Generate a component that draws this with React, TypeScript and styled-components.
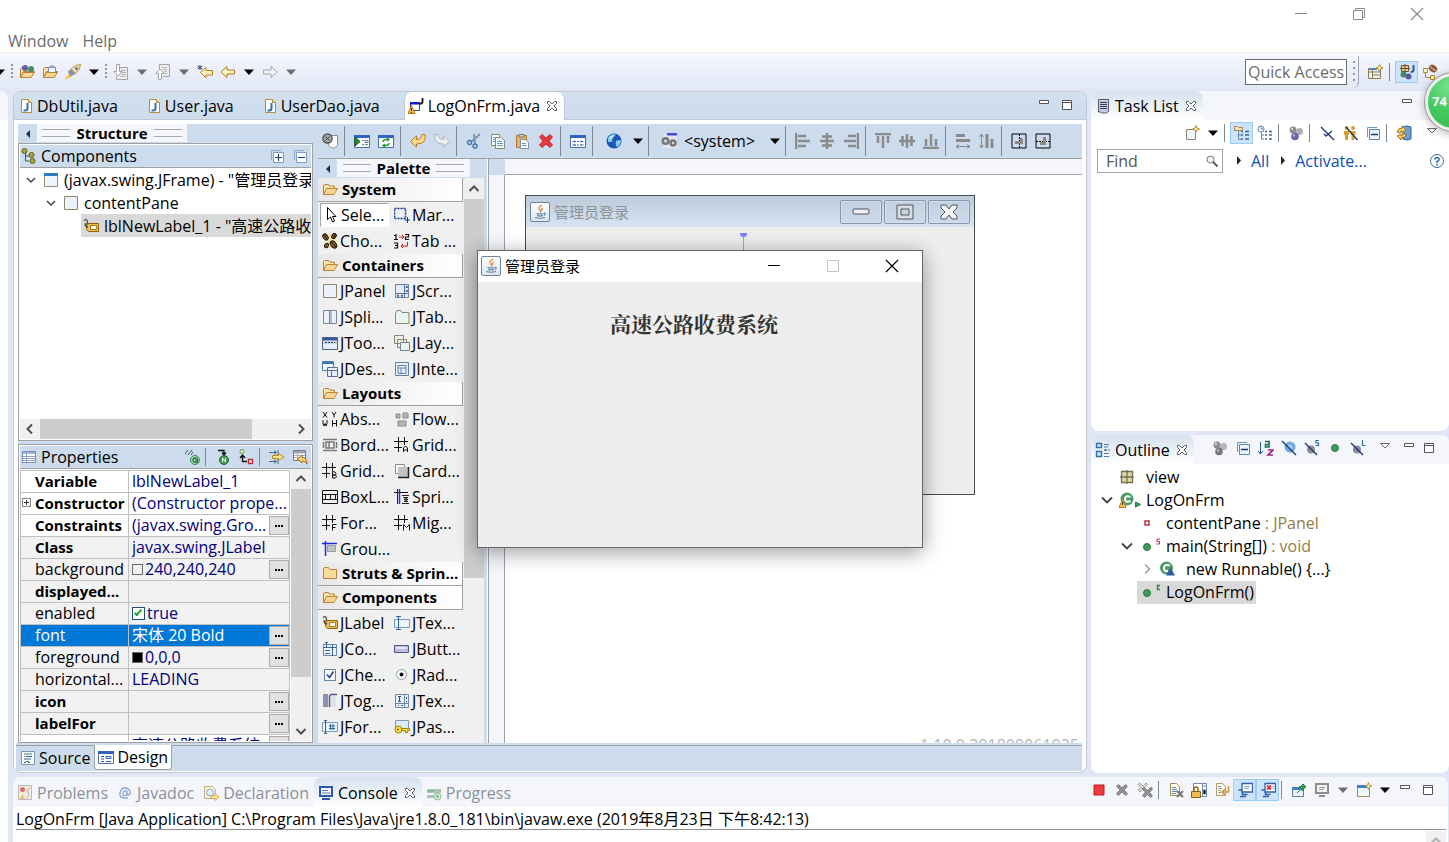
import React from "react";
import styled, { createGlobalStyle, css } from "styled-components";

const Global = createGlobalStyle`
  *, *::before, *::after { box-sizing: border-box; }
  body { margin: 0; }
  body, button, input, table {
    font-family: "Open Sans", "Noto Sans CJK SC", sans-serif;
    font-size: 16px;
    line-height: 20px;
    color: #000;
  }
  button, input { margin: 0; padding: 0; border: 0; background: none; }
  ul { list-style: none; margin: 0; padding: 0; }
`;

const c = {
  frame: "#e1e6f6",
  blue: "#cddcec",
  pale: "#f4f6fc",
  line: "#a0a0a0",
  edge: "#c3c7d0",
  grey: "#f0f0f0",
};

const boldFace = css`
  font-size: 15px;
  font-weight: 700;
`;

/* ------------------------------------------------------------------ icons */

const folderOpen = (
  <>
    <path d="M1.500 13.500v-9l1-1h4l1 1.500h5v3" fill="#fbe3ae" stroke="#b5833a" />
    <path d="M1.500 13.500l3-6h11l-3.500 6z" fill="#f8d795" stroke="#b5833a" />
  </>
);
const gridHash = <path d="M0 4.500h14M0 10.500h8M4.500 0v15M10.500 0v8" stroke="#111" fill="none" />;
const balls = (a: string, b: string, d: string) => (
  <>
    <circle cx="5" cy="5" r="3.500" fill={a} />
    <circle cx="11.500" cy="6.500" r="3.500" fill={b} />
    <circle cx="7" cy="11.500" r="3.800" fill={d} />
    <circle cx="4" cy="4" r="1.200" fill="#fff" opacity=".6" />
    <circle cx="6" cy="10.500" r="1.200" fill="#fff" opacity=".5" />
  </>
);
const windowBox = (
  <>
    <path d="M.5 2.500h15v12H.5z" fill="#fff" stroke="#4a6fa5" />
    <path d="M0 2h16v3H0z" fill="#2f63c0" />
  </>
);
const grey = "#8b8b8b";

const icons: Record<string, React.ReactNode> = {
  java: (
    <>
      <path d="M3.500 1.500h7l3 3v10h-10z" fill="#fefefe" stroke="#b0903f" />
      <path d="M10.500 1.500v3h3" fill="#f3d98e" stroke="#b0903f" />
      <path d="M9.500 5v5q0 2.500-2.500 2.500H5.500" stroke="#2f6ea5" strokeWidth="2" fill="none" />
    </>
  ),
  javaForm: (
    <>
      <path d="M2.500 4.500h9v8h-9z" fill="#fff" stroke="#3b4a90" />
      <path d="M2 4h10v2.500H2z" fill="#1515d0" />
      <path d="M14.500 0v4q0 2-3 1.500" stroke="#111" strokeWidth="1.800" fill="none" />
      <path d="M3.500 7.500l3.500 8H0z" fill="#f6b94a" stroke="#b97a1d" />
      <path d="M3.500 10v3M3.500 14v1" stroke="#333" />
    </>
  ),
  close: (
    <path
      d="M3.500 3.500h2l2.500 2.500 2.500-2.500h2v2L10 8l2.500 2.500v2h-2L8 10l-2.500 2.500h-2v-2L6 8 3.500 5.500z"
      fill="#fff"
      stroke="#5c5c5c"
    />
  ),
  folderBalls: (
    <>
      {folderOpen}
      <circle cx="6" cy="4" r="3" fill="#6a5aa8" />
      <circle cx="12" cy="5" r="3" fill="#3f9260" />
      <path d="M1.500 13.500l3-5h11l-3.500 5z" fill="#f8d795" stroke="#b5833a" />
    </>
  ),
  folderDoc: (
    <>
      {folderOpen}
      <path d="M6.500 3.500h7v5h-7zM8 3V2h4v1" fill="#eef4fb" stroke="#7c90b5" />
      <path d="M1.500 13.500l3-5h11l-3.500 5z" fill="#f8d795" stroke="#b5833a" />
    </>
  ),
  rocket: (
    <>
      <path d="M15.500.5Q10 .5 6 5l4.500 4.500q5-4 5-9z" fill="#f6dfae" stroke="#c0904c" />
      <path d="M6 5L3 7.500 5 13l5.500-3.500z" fill="#8b8fa8" />
      <circle cx="11.500" cy="4.500" r="1.500" fill="#5a75b5" />
      <path d="M4 9.500l-4 6 6-2.500z" fill="#f5c02c" />
    </>
  ),
  caret: <path d="M3 5.500h10l-5 5.500z" fill="#000" />,
  caretGrey: <path d="M3 5.500h10l-5 5.500z" fill="#6d6d6d" />,
  stepDown: (
    <>
      <path d="M6.500 3.500h8v12h-11V12" fill="#eee" stroke="#a5a5a5" />
      <path d="M8 6.500h5M8 8.500h5M8 10.500h5M7 12.500h6" stroke="#b5b5b5" />
      <path d="M3.500.5h3v7h2.500L5 12 1 7.500h2.500z" fill="#fff" stroke="#a2a2a2" />
    </>
  ),
  stepUp: (
    <>
      <path d="M4.500 5V.5h10v12H8" fill="#eee" stroke="#a5a5a5" />
      <path d="M7 3.500h5M8 5.500h4M9 7.500h3M9 9.500h3" stroke="#b5b5b5" />
      <path d="M3.500 15.500h3v-6h2.500L5 5 1 9.500h2.500z" fill="#fff" stroke="#a2a2a2" />
    </>
  ),
  backStar: (
    <>
      <path d="M3.500 8.500L9 3.500v3h6.500v4.500H9v3z" fill="#fff3c4" stroke="#b07d12" />
      <path d="M3 1v5M.5 2l5 3M5.500 2l-5 3" stroke="#264b77" />
    </>
  ),
  back: <path d="M1 8l6-5.500v3.500h7.500v4H7v3.500z" fill="#fff3c4" stroke="#b07d12" />,
  forward: <path d="M15 8L9 2.500v3.500H1.500v4H9v3.500z" fill="#f2f2f2" stroke="#a5a5a5" />,
  openPersp: (
    <>
      <path d="M.5 4.500h12v10H.5zM.5 8h12M4.500 5v9M4.500 11h8" fill="#e9f2fb" stroke="#8a7d50" />
      <path d="M1 4h8v2H1z" fill="#4f86c2" />
      <path d="M11.500.5l1 2.500 2.500 1-2.500 1-1 2.500-1-2.500-2.500-1 2.500-1z" fill="#fff2a8" stroke="#b8923a" />
    </>
  ),
  perspJava: (
    <>
      <path d="M2.500 1.500h7v6h-7zM6 0v9M1 4.500h10" stroke="#7a4a2a" fill="#e7cf9d" />
      <path d="M14.500 1v5q0 2-3 2" stroke="#2c5da0" strokeWidth="2" fill="none" />
      <circle cx="4.500" cy="10.500" r="3" fill="#3b8b55" />
      <circle cx="9.500" cy="12.500" r="3" fill="#6254a5" />
    </>
  ),
  perspEE: (
    <>
      <path d="M1.500 4.500h4v4h-4zM8.500 11.500h4v4h-4z" fill="#fff5c9" stroke="#b78a24" />
      <path d="M3.500 9v4.500H8" stroke="#8a8a8a" fill="none" />
      <ellipse cx="11" cy="4.500" rx="4.500" ry="3.500" fill="#8b5a34" transform="rotate(35 11 4.500)" />
      <path d="M8 2q2 3.500 6.500 5" stroke="#f0d9bd" fill="none" />
    </>
  ),
  leftTri: <path d="M10 4v8L6 8z" fill="#12315f" />,
  components: (
    <>
      <path d="M4.500 4v9H8M4.500 8H10" stroke="#1d5d78" fill="none" />
      <circle cx="3.500" cy="3" r="2.500" fill="#a9a93a" stroke="#5a5a14" />
      <circle cx="10.500" cy="7" r="2.500" fill="#a9a93a" stroke="#5a5a14" />
      <circle cx="11.500" cy="13" r="2.500" fill="#a9a93a" stroke="#5a5a14" />
    </>
  ),
  expandAll: (
    <>
      <path d="M2.500 12V2.500H12" fill="none" stroke="#8fa9c9" />
      <path d="M4.500 4.500h10v10h-10z" fill="#fff" stroke="#7d9cc3" />
      <path d="M6 9.500h7M9.500 6v7" stroke="#123f78" />
    </>
  ),
  collapseAll: (
    <>
      <path d="M2.500 12V2.500H12" fill="none" stroke="#8fa9c9" />
      <path d="M4.500 4.500h10v10h-10z" fill="#fff" stroke="#7d9cc3" />
      <path d="M6 9.500h7" stroke="#123f78" />
    </>
  ),
  chevDown: <path d="M4 6l4 4 4-4" stroke="#444" strokeWidth="1.500" fill="none" />,
  chevRight: <path d="M6 3.500l4.500 4.500L6 12.500" stroke="#9a9a9a" strokeWidth="1.500" fill="none" />,
  chevUp: <path d="M3.500 10L8 5.500l4.500 4.500" stroke="#505050" strokeWidth="2" fill="none" />,
  chevUpPale: <path d="M3.500 10L8 5.500l4.500 4.500" stroke="#b0b0b0" strokeWidth="2" fill="none" />,
  scrollDown: <path d="M3.500 6L8 10.500 12.500 6" stroke="#505050" strokeWidth="2" fill="none" />,
  scrollLeft: <path d="M10 3.500L5.500 8l4.500 4.500" stroke="#505050" strokeWidth="2" fill="none" />,
  scrollRight: <path d="M6 3.500l4.500 4.500L6 12.500" stroke="#505050" strokeWidth="2" fill="none" />,
  jframe: (
    <>
      <path d="M1.500 1.500h13v13h-13z" fill="#eef5fc" stroke="#9b8f64" />
      <path d="M1 1h14v3H1z" fill="#2f7dbd" />
    </>
  ),
  jpanel: <path d="M1.500 1.500h13v13h-13z" fill="#e9f1fb" stroke="#8c8766" />,
  jlabel: (
    <>
      <path d="M5.500 5.500h10v8h-10l-2-2.500v-3z" fill="#f0bf4e" stroke="#8a6412" />
      <path d="M7.500 7.500h6v4h-6z" fill="#fff" stroke="#a97b1a" />
      <path d="M1 2.500q3-2 3.500 1T2 6q0 2.500 3 3" stroke="#4a4a30" fill="none" strokeWidth="1.300" />
    </>
  ),
  propsTable: (
    <>
      <path d="M1.500 2.500h13v11h-13z" fill="#fff" stroke="#7b8da8" />
      <path d="M2 3h12v2H2z" fill="#9ab2d4" />
      <path d="M2 7.500h12M2 9.500h12M2 11.500h12M5.500 5v8" stroke="#8fa2c0" />
    </>
  ),
  gotoClass: (
    <>
      <path d="M1 5l3-4M4 6l4-5M7 6l2-3" stroke="#2d5f75" />
      <circle cx="11" cy="11" r="4.500" fill="#a8d8b4" stroke="#3c8a56" />
      <path d="M13.500 9.500Q9 8 9 11t4.500 2V11h-2" stroke="#1f6a3a" strokeWidth="1.300" fill="none" />
    </>
  ),
  nArrow: (
    <>
      <path d="M3 1.500h6V5M7 3.500L9 6l2-2.500" stroke="#111" strokeWidth="1.300" fill="none" />
      <circle cx="9" cy="11" r="4.500" fill="#3f9a4e" stroke="#246b30" />
      <path d="M7.500 13V9l3 4V9" stroke="#fff" fill="none" />
    </>
  ),
  convert: (
    <>
      <circle cx="4" cy="2.500" r="2" fill="#e7f5d5" stroke="#5d9a2c" />
      <path d="M4.500 13V7M2 9l2.500-3L7 9M4.500 12.500H9" stroke="#111" strokeWidth="1.400" fill="none" />
      <path d="M10.500 10.500h4v4h-4z" fill="#fff" stroke="#c42a36" strokeWidth="1.500" />
    </>
  ),
  filterAdv: (
    <>
      <path d="M0 3.500h7M9 1v5M5 1.500L7.500 3.500 5 5.500M0 12.500h7M9 10v5M5 10.500l2.500 2-2.500 2" stroke="#46688e" fill="none" />
      <path d="M3.500 6.500h6V4.500l5.500 3.500-5.500 3.500V9.500h-6z" fill="#ffe59a" stroke="#bb8620" />
    </>
  ),
  tableBack: (
    <>
      <path d="M1.500 1.500h12v10h-12z" fill="#fff" stroke="#7d7d7d" />
      <path d="M2 2h11v2.500H2z" fill="#9aa4b5" />
      <path d="M2 6.500h11M2 8.500h11M5.500 4v7" stroke="#a6afbd" />
      <path d="M5.500 10l4.500-4v2.500q5 0 5 6.500-1-3-5-3V14z" fill="#ffd66d" stroke="#a87416" />
    </>
  ),
  inspector: (
    <>
      <path d="M6.500 2.500h9v10l-3 2.500h-3l-3-3z" fill="#fff" stroke="#8a8a8a" />
      <circle cx="5.500" cy="5.500" r="4.500" fill="#aaa" stroke="#555" strokeWidth="1.500" />
      <path d="M3.500 3.500l4 4M7.500 3.500l-4 4" stroke="#333" />
    </>
  ),
  preview: (
    <>
      {windowBox}
      <path d="M8 7.500h2M8 11.500h2M11 7.500h3v2h-3zM11 11.500h3" stroke="#5c84be" fill="none" />
      <path d="M1 4l5 4.500L1 13z" fill="#2e8b2e" stroke="#17561b" />
    </>
  ),
  refresh: (
    <>
      {windowBox}
      <path d="M5 9q0-2.500 3-2.500h2M9 5l2 1.500L9 8M11 10q0 2.500-3 2.500H6M7 11l-2 1.500L7 14" stroke="#2d9a33" strokeWidth="1.400" fill="none" />
    </>
  ),
  undo: <path d="M.5 8.500L6.500 3v3.500q5.500 0 5.500-5h3Q17 11 6.500 11v3z" fill="#fbdc8d" stroke="#b8791c" />,
  redo: <path d="M15.500 8.500L9.500 3v3.500q-5.500 0-5.500-5H1Q-1 11 9.500 11v3z" fill="#eceef2" stroke="#aeb4bf" />,
  cut: (
    <>
      <path d="M14 1L5 9M8 1l1 10" stroke="#7790ae" strokeWidth="1.800" />
      <circle cx="3.500" cy="9.500" r="2" fill="none" stroke="#3f78ad" strokeWidth="1.400" />
      <circle cx="9" cy="13" r="2" fill="none" stroke="#3f78ad" strokeWidth="1.400" />
    </>
  ),
  copy: (
    <>
      <path d="M1.500 1.500h8v11h-8z" fill="#fff" stroke="#8c8c70" />
      <path d="M5.500 4.500h6l3 3v8h-9z" fill="#f2f7fd" stroke="#8c8c70" />
      <path d="M7 8.500h5M7 10.500h6M7 12.500h6M3 4.500h3M3 6.500h2M3 8.500h2" stroke="#6f9bd0" />
    </>
  ),
  paste: (
    <>
      <path d="M2.500 2.500h10v12h-10z" fill="#e5b26a" stroke="#b17b32" />
      <path d="M5 1.500h5v2.500H5z" fill="#d8d8d8" stroke="#777" />
      <path d="M6.500 6.500h5l3 3v6h-8z" fill="#fff" stroke="#8090a8" />
      <path d="M8 10.500h4M8 12.500h5" stroke="#6f9bd0" />
    </>
  ),
  del: <path d="M1.500 4L4 1.500 8 5l4-3.500L14.500 4 11 8l3.500 4-2.500 2.500L8 11l-4 3.500L1.500 12 5 8z" fill="#e23b3f" stroke="#c82a30" />,
  testWin: (
    <>
      {windowBox}
      <path d="M2.500 8.500h3M10.500 8.500h3M2.500 12h3M10.500 12h3M7 8.500h2M7 12h2" stroke="#2f63c0" />
      <path d="M5 7.500v2M11 7.500v2M5 11v2M11 11v2" stroke="#2f63c0" />
    </>
  ),
  globe: (
    <>
      <circle cx="8" cy="8" r="7.500" fill="#1c57b8" />
      <path d="M2 5q3-4 7-4 1 2-2 3t-1 3-4 2zM10 8q3-2 5 0-1 5-4 6-2-2-1-6z" fill="#7fd0f0" />
      <circle cx="5.500" cy="4.500" r="2" fill="#fff" opacity=".55" />
    </>
  ),
  gears: (
    <>
      <path d="M2 1h14v14H2z" fill="#e3e6f0" />
      <path d="M6 0h10v2.500H6z" fill="#4a4ad8" />
      <circle cx="4.500" cy="8" r="2.800" fill="#ddd" stroke="#777" strokeWidth="2.500" />
      <circle cx="12" cy="10" r="2.500" fill="#ddd" stroke="#777" strokeWidth="2.500" />
    </>
  ),
  alignL: <path d="M1 0v16M3 3h8M3 8h12M3 13h8" stroke={grey} strokeWidth="2.500" />,
  alignH: <path d="M8 0v16M3 3.500h10M1 8h14M3 12.500h10" stroke={grey} strokeWidth="2.500" />,
  alignR: <path d="M15 0v16M5 3h8M1 8h12M5 13h8" stroke={grey} strokeWidth="2.500" />,
  alignT: <path d="M0 1h16M3 3v7M8 3v12M13 3v7" stroke={grey} strokeWidth="2.500" />,
  alignM: <path d="M0 8h16M3.500 3v10M8 1v14M12.500 3v10" stroke={grey} strokeWidth="2.500" />,
  alignB: <path d="M0 15h16M3 6v7M8 1v12M13 6v7" stroke={grey} strokeWidth="2.500" />,
  sameW: (
    <>
      <path d="M1 2.500h9M1 7.500h14" stroke={grey} strokeWidth="3" />
      <path d="M1 13.500h14M4 11.500l-3 2 3 2M12 11.500l3 2-3 2" stroke={grey} fill="none" />
    </>
  ),
  sameH: (
    <>
      <path d="M8 1v14M13 6v9" stroke={grey} strokeWidth="3" />
      <path d="M2.500 1v14M.5 4l2-3 2 3M.5 12l2 3 2-3" stroke={grey} fill="none" />
    </>
  ),
  centerH: (
    <>
      <path d="M1 1h14v14H1z" fill="none" stroke="#000" />
      <path d="M8.500 1v14" stroke="#000" strokeDasharray="2 1" />
      <path d="M4 8h8v3H4zM9 5h3v3H9z" fill="#8a8a8a" />
    </>
  ),
  centerV: (
    <>
      <path d="M1 1h14v14H1z" fill="none" stroke="#000" />
      <path d="M1 8.500h14" stroke="#000" strokeDasharray="2 1" />
      <path d="M5 9h3v3H5zM8 4h3v8H8z" fill="#8a8a8a" />
    </>
  ),
  folderOpen,
  folderClosed: <path d="M1.500 13.500v-10l1-1h4l1.500 2h6.500v9z" fill="#fbdc9c" stroke="#b5833a" />,
  cursor: <path d="M4.500.5v12l3-2.500 2 5 2-1-2-4.500h3.500z" fill="#fff" stroke="#000" />,
  marquee: (
    <>
      <path d="M.5 1.500h11v10H.5z" fill="none" stroke="#12379c" strokeWidth="1.500" strokeDasharray="2 1" />
      <path d="M13.500 10v6M10.500 13h6" stroke="#12379c" />
    </>
  ),
  beans: (
    <>
      <path d="M6 1h6l3 8-4 6H6z" fill="#efeaa8" />
      <g fill="#8a6034" stroke="#1e140a">
        <ellipse cx="3.500" cy="4" rx="2.300" ry="3.300" transform="rotate(-35 3.500 4)" />
        <ellipse cx="12" cy="3" rx="2" ry="2.700" transform="rotate(35 12 3)" />
        <ellipse cx="11.500" cy="11.500" rx="2.500" ry="4" transform="rotate(-40 11.500 11.500)" />
        <ellipse cx="4.500" cy="12.500" rx="1.800" ry="2.300" transform="rotate(30 4.500 12.500)" />
      </g>
      <path d="M2 2l3 4M9 9l5 5M13.500 1L11 5" stroke="#1e140a" />
    </>
  ),
  tabOrder: (
    <>
      <path d="M0 2.500h2M2 1v6M0 6.500h4M11 1.500h3.500v2.500h-3v2.500H15M0 10h3.500v5H0M1 12.500h2.500" stroke="#111" strokeWidth="1.200" fill="none" />
      <path d="M5 4h4M8 2l2 2-2 2M13.500 9v4H7M9 11l-2 2 2 2" stroke="#e01616" fill="none" />
    </>
  ),
  jscroll: (
    <>
      <path d="M1.500 1.500h13v13h-13z" fill="#e3edf8" stroke="#6f83a0" />
      <path d="M10.500 2v12M2 10.500h12" stroke="#5b7399" />
      <path d="M12 3.500h1.500v1H12zM12 7.500h1.500v1H12zM3.500 12h1v1.500h-1zM7.500 12h1v1.500h-1z" fill="#223f73" stroke="#4d6a9b" />
    </>
  ),
  jsplit: <path d="M1.500 1.500h13v13h-13zM7.500 2v12M9 2v12" fill="#e9f1fb" stroke="#7d86a0" />,
  jtab: <path d="M1.500 14.500v-10l1.500-3h4l1 2h7v11z" fill="#eaf4ee" stroke="#8c8766" />,
  jtoolbar: (
    <>
      <path d="M.5 2.500h15v12H.5z" fill="#e5edf8" stroke="#4e6286" />
      <path d="M1 3h14v2.500H1z" fill="#3557a0" />
      <path d="M1 6h14v3H1z" fill="#c9d6ee" />
      <path d="M3 7.500h10" stroke="#333" strokeDasharray="2 1" />
    </>
  ),
  jlayered: (
    <g fill="#e9f1ea" stroke="#8c8766">
      <path d="M.5.500h9v8h-9zM3.500 4.500h9v8h-9z" />
      <path d="M6.500 7.500h9v8h-9z" stroke="#6f83a0" />
    </g>
  ),
  jdesktop: (
    <>
      <path d="M.5.500h11v9H.5z" fill="#f2f6fb" stroke="#4e7fb5" />
      <path d="M.5 1h11v2H.5z" fill="#3878b8" />
      <path d="M5.500 6.500h10v9h-10zM9.500 9v6M6 9.500h9" fill="#e4eefa" stroke="#5a6c98" />
    </>
  ),
  jinternal: <path d="M1.500 1.500h13v13h-13zM4 4.500h8v8H4zM4 7h8M7 7v5" fill="#eef4fb" stroke="#5f7ca6" />,
  absolute: (
    <path
      d="M1 1l4 5.500M5 1L1 6.500M10 1l2 3v2.500M14 1l-2 3M1 9v3.500l1 2.500 1-2.500 1 2.500 1-2.500V9M10.500 9v6.500M14.500 9v6.500M10.500 12.500h4"
      stroke="#111"
      fill="none"
    />
  ),
  flow: (
    <g fill="#b5b5b5" stroke="#8a8a8a">
      <path d="M2 3h4v4H2zM9 2h5v5H9zM4 10h8v5H4z" />
    </g>
  ),
  border: (
    <path d="M1 2.500h14M1 13.500h14M1.500 5v6M14.500 5v6M4 5h8v6H4zM7 5v6" stroke="#777" fill="none" strokeWidth="1.500" />
  ),
  gridA: <>{gridHash}<path d="M9.500 15v-4l2-2 2 2v4M9.500 13h4" stroke="#111" fill="none" /></>,
  gridB: <>{gridHash}<path d="M10.500 8.500v6.500h3l1-1.500-1-1.500h-3 2.500l1-1.500-1-1.500z" stroke="#111" fill="none" /></>,
  gridF: <>{gridHash}<path d="M10.500 15.500v-6h4M10.500 12.500h3" stroke="#111" fill="none" /></>,
  gridM: <>{gridHash}<path d="M9.500 15.500v-6l3 3 3-3v6" stroke="#111" fill="none" /></>,
  card: (
    <>
      <path d="M1.500 1.500h9v9h-9z" fill="#fff" stroke="#888" />
      <path d="M4 4h10v10H4z" fill="#c2c2c2" />
      <path d="M14.500 4v10.500H4" stroke="#222" fill="none" strokeWidth="1.500" />
    </>
  ),
  box: <path d="M.5 1.500h15v13H.5zM.5 5.500h15M3.500 5.500v5h10v-5M8.500 5.500v5M.5 10.500h15" fill="none" stroke="#111" />,
  spring: (
    <>
      <path d="M0 3.500h14" stroke="#111" />
      <path d="M5.500 0v15" stroke="#2030e0" strokeWidth="1.500" />
      <path d="M3.500 0v15M8 6.500h7M9 8.500h5l-4 2h4l-4 2h4M8 14.500h7" stroke="#222" fill="none" />
    </>
  ),
  group: (
    <>
      <path d="M0 2.500h15M3.500 0v15" stroke="#1c2cf0" strokeWidth="1.500" />
      <path d="M5.500 4.500h8v6h-8z" fill="#c4c4c4" stroke="#999" />
    </>
  ),
  jtext: (
    <>
      <path d="M.5 4.500h15v8H.5z" fill="#eaf3fc" stroke="#7b98be" />
      <path d="M4.500 1v14M2 1.500h5M2 14.500h5" stroke="#31629c" />
    </>
  ),
  jcombo: (
    <>
      <path d="M1.500 3.500h13v11h-13z" fill="#e9f2fb" stroke="#6c86ac" />
      <path d="M1 6.500h13M10.500 4v11M3 9.500h5M3 12.500h5M4.500 1v5M3 1.500h3" stroke="#3d6499" />
    </>
  ),
  jbutton: (
    <>
      <path d="M.5 4.500h14v7H.5z" fill="#b9bde4" stroke="#55597f" />
      <path d="M2 6h11v2H2z" fill="#e6e8f8" />
    </>
  ),
  jcheck: (
    <>
      <path d="M2.500 2.500h11v11h-11z" fill="#f2f8fe" stroke="#6583ab" />
      <path d="M5 7.500l2.500 3 4-6" stroke="#24477c" strokeWidth="1.600" fill="none" />
    </>
  ),
  jradio: (
    <>
      <circle cx="7.500" cy="7.500" r="5" fill="#fff" stroke="#8aa191" />
      <circle cx="7.500" cy="7.500" r="2" fill="#111" />
    </>
  ),
  jtoggle: (
    <>
      <path d="M1 1h5v13H1z" fill="#8d90b5" />
      <path d="M7.500 14V3l1.500-1.500h6" stroke="#55598a" strokeWidth="1.500" fill="none" />
      <path d="M9 3h5v11H9z" fill="#dfe1f2" />
    </>
  ),
  jtextarea: (
    <>
      <path d="M1.500 1.500h13v13h-13zM10.500 2v12M2 10.500h12" fill="#eaf3fc" stroke="#6c86ac" />
      <path d="M5.500 3v6M4 3.500h3M4 8.500h3M12.500 4v2M12.500 8v1M4 12.500h1M7 12.500h2" stroke="#2f5690" />
    </>
  ),
  jformat: (
    <>
      <path d="M.5 3.500h15v9H.5z" fill="#eaf3fc" stroke="#7b98be" />
      <path d="M3.500 1v14M2 1.500h3M2 14.500h3M8.500 5v6M11 5v6M7 7h6M7 9.500h6" stroke="#31629c" />
    </>
  ),
  jpass: (
    <>
      <path d="M1.500 1.500h13v8h-13z" fill="#dcecf9" stroke="#8098b5" />
      <circle cx="4.500" cy="10.500" r="3.500" fill="#ffe04a" stroke="#a37d12" />
      <path d="M7.500 9.500h8v2h-2v2h-2v-2h-4z" fill="#ffe04a" stroke="#a37d12" />
      <circle cx="4" cy="10.500" r="1" fill="#7a5c10" />
    </>
  ),
  javaCup: (
    <>
      <path d="M10 1q-5 3-2 5 1.500 1.500 0 2.500M11 4Q8.500 5 10 7" stroke="#e8813a" strokeWidth="1.200" fill="none" />
      <path d="M4.500 9.500q3.500 1 7 0M5 11.500q3 1 6 0M3 13.500q5 1.500 10 0M12 9q2.500 0 0 2.500" stroke="#5b819e" strokeWidth="1.200" fill="none" />
    </>
  ),
  minPane: <path d="M3.500 3.500h9v3h-9z" fill="#fff" stroke="#555" />,
  maxPane: <path d="M3.500 3.500h9v9h-9zM3.500 5.500h9" fill="#fff" stroke="#555" />,
  viewMenu: <path d="M3.500 3.500h9L8 8z" fill="#fff" stroke="#6b6b6b" />,
  taskList: (
    <>
      <path d="M3.500 1.500h10v12q-2 1.500-3 1.500h-4q-1-2-3-1z" fill="#c9cbe0" stroke="#55567a" />
      <path d="M5 4.500h7M5 6.500h7M5 8.500h7M5 10.500h7" stroke="#3c3d5a" />
    </>
  ),
  newTask: (
    <>
      <path d="M2.500 4.500h9v10h-9z" fill="#eef5fc" stroke="#8b8466" />
      <path d="M12 .5l1 2.500 2.500 1L13 5l-1 2.500L11 5 8.500 4 11 3z" fill="#fff2a8" stroke="#b8923a" />
    </>
  ),
  categorized: (
    <>
      <path d="M.5 5.500v-4h3l1 1h4v3z" fill="#f7e3bd" stroke="#a5845a" />
      <path d="M4.500 6v8.500H7M4.500 10H7" stroke="#6d83a0" fill="none" />
      <path d="M7 6.500h2M7 10h2M7 14h2M11 6.500h4M11 10h4M11 14h4" stroke="#3e6597" strokeWidth="1.500" />
    </>
  ),
  scheduled: (
    <>
      <circle cx="4" cy="4" r="3" fill="#fff" stroke="#5f80ab" />
      <path d="M4 2v2h2M4.500 7.500v6.500H7M4.500 10H7" stroke="#5f80ab" fill="none" />
      <path d="M8 6.500h2M8 10h2M8 14h2M12 6.500h3M12 10h3M12 14h3" stroke="#3e6597" strokeWidth="1.500" />
    </>
  ),
  workweek: balls("#8c8c8c", "#b0b0b0", "#6b62ab"),
  greyBalls: balls("#8c8c8c", "#b5b5b5", "#777"),
  focus: <path d="M2 2l13 13M5 9l2 2 6-5" stroke="#203a73" strokeWidth="1.400" fill="none" />,
  mine: (
    <>
      <g fill="#d99f2b">
        <circle cx="4.500" cy="3" r="2" />
        <circle cx="11" cy="3" r="2" />
        <path d="M2 6h5v4H6v5H3v-5H2zM8.500 6h5v4h-1v5h-3v-5h-1z" />
      </g>
      <path d="M4 2l11.500 13" stroke="#203a73" strokeWidth="1.400" />
    </>
  ),
  collapse: (
    <>
      <path d="M2.500 12V2.500H12" fill="none" stroke="#6d97b5" />
      <path d="M4.500 4.500h10v10h-10z" fill="#eaf5fd" stroke="#5d86a8" />
      <path d="M6 9.500h7" stroke="#0c3f72" strokeWidth="1.500" />
    </>
  ),
  sync: (
    <>
      <path d="M7 2q4-2 8 0v12q-4 2-8 0z" fill="#6f9fd6" stroke="#315f9a" />
      <path d="M1 7q1-4 5-4v-2l4 4-4 3V6Q4 6 4 8zM10 9q0 4-5 4v2l-4-4 4-2v1.500q2 0 2-2z" fill="#f7cf63" stroke="#9d7116" />
    </>
  ),
  search: (
    <>
      <circle cx="6.500" cy="6.500" r="3.500" fill="#eef4fa" stroke="#777" />
      <path d="M9 9l4.500 4.500" stroke="#555" strokeWidth="1.800" />
    </>
  ),
  rightTri: <path d="M6 3v9l4-4.500z" fill="#222" />,
  help: (
    <>
      <circle cx="8" cy="8" r="6.500" fill="#fff" stroke="#3c6a93" />
      <path d="M6 6.500Q6 4.500 8 4.500t2 2Q10 8 8 8.500V10M8 11v1.500" stroke="#2d6da6" strokeWidth="1.600" fill="none" />
    </>
  ),
  outline: (
    <>
      <path d="M1.500 1.500h5v4h-5zM1.500 9.500h5v5h-5z" fill="#cfe6fb" stroke="#2f6fae" strokeWidth="1.400" />
      <path d="M9 2.500h5M9 11.500h5M9 14.500h5M9 5h4" stroke="#4e7cab" />
      <path d="M9.500 7.500h2v1h-2zM13 8h2" stroke="#4e7cab" fill="none" />
    </>
  ),
  sortAz: (
    <>
      <path d="M2.500 2v12M0 11l2.500 3L5 11" stroke="#2c5b95" fill="none" />
      <path d="M7 1.500h4V7H7.500V4.500H11" stroke="#187058" strokeWidth="1.600" fill="none" />
      <path d="M10 10h5l-5 5h5" stroke="#a3248b" strokeWidth="1.600" fill="none" />
    </>
  ),
  hideFields: (
    <>
      <circle cx="9" cy="7" r="5.500" fill="#6fa9de" />
      <circle cx="9" cy="7" r="2.500" fill="#a9cdf0" />
      <path d="M1 1l14 14" stroke="#203a73" strokeWidth="1.400" />
    </>
  ),
  hideStatic: (
    <>
      <circle cx="7" cy="9.500" r="4" fill="#8b8b98" />
      <path d="M1 3l12 12" stroke="#203a73" strokeWidth="1.400" />
      <path d="M15 .5h-3v2.500h2.500v2.500H11.500" stroke="#2f6f9a" strokeWidth="1.200" fill="none" />
    </>
  ),
  greenDot: <circle cx="8" cy="8" r="3.500" fill="#3f9a58" stroke="#2b7441" />,
  hideLocal: (
    <>
      <circle cx="7" cy="9.500" r="4" fill="#8b8b98" />
      <path d="M1 3l12 12" stroke="#203a73" strokeWidth="1.400" />
      <path d="M12.500 0v5.500h3" stroke="#2f6f9a" strokeWidth="1.200" fill="none" />
    </>
  ),
  pkg: <path d="M2.500 2.500h11v11h-11zM8 1v14M1 8h14" fill="#dcd9ae" stroke="#77704a" strokeWidth="1.300" />,
  classRun: (
    <>
      <circle cx="8" cy="7" r="6.500" fill="#4b9b62" />
      <path d="M11.500 5Q6 3 6 7t5.500 2" stroke="#fff" strokeWidth="2" fill="none" />
      <path d="M3.500 7.500l3.500 8H0z" fill="#f8c15a" stroke="#b97a1d" />
      <path d="M3.500 10v3" stroke="#333" />
      <path d="M16.500 10v5l5-2.500z" fill="#3f9a58" stroke="#2b7441" />
    </>
  ),
  fieldRed: <path d="M6 6h4v4H6z" fill="#fff" stroke="#c5303e" strokeWidth="1.500" />,
  methodS: (
    <>
      <circle cx="8" cy="9" r="3.500" fill="#3f9a58" stroke="#2b7441" />
      <path d="M21 1h-3v2.500h2.500v2.500H17.500" stroke="#c5304e" fill="none" />
    </>
  ),
  methodC: (
    <>
      <circle cx="8" cy="9" r="3.500" fill="#3f9a58" stroke="#2b7441" />
      <path d="M21 1.500h-2.500v4H21" stroke="#2b8a41" fill="none" strokeWidth="1.400" />
    </>
  ),
  classAnon: (
    <>
      <circle cx="7.500" cy="7" r="6.500" fill="#4b9b62" />
      <path d="M11 4.500Q5 2.500 5 7t4 2.500" stroke="#fff" strokeWidth="2" fill="none" />
      <path d="M11.500 6.500l4.500 8H7z" fill="#2c5fa8" />
    </>
  ),
  source: (
    <>
      <path d="M1.500 1.500h13v13h-13z" fill="#f8fbfe" stroke="#7d98b8" />
      <path d="M4 4h8M6 11.500h3" stroke="#2f8a4f" strokeWidth="1.200" />
      <path d="M6 6.500h6M4 9h7M4 12.500h2" stroke="#34619a" strokeWidth="1.200" />
      <path d="M4 6.500h1M8 12.500h2" stroke="#b5472f" strokeWidth="1.200" />
    </>
  ),
  design: (
    <>
      {windowBox}
      <path d="M3 7.500h3M3 10h3M3 12.500h3M8 7.500h5v2H8zM8 12.500h5" stroke="#2f5fa8" fill="none" />
    </>
  ),
  problems: (
    <>
      <path d="M1.500.500h13v14h-13z" fill="#f3ecd6" stroke="#b5b8c6" />
      <circle cx="5.500" cy="4.500" r="2.500" fill="#e06a72" />
      <path d="M5.500 9l3 5h-6z" fill="#eec277" />
      <path d="M13 3q-4 1-2 4t-1 6" stroke="#9fb0d4" fill="none" />
    </>
  ),
  at: (
    <path d="M10 6Q6 5 6 8.500T9.500 10L10 5.500q-.5 5 1.500 4.500 2-.5 1.500-3.500Q12 3 8 3T3 8t5 5h3" stroke="#8aa5cf" fill="none" strokeWidth="1.300" />
  ),
  declaration: (
    <>
      <path d="M1.500 1.500h8l3 3v9h-11z" fill="#f7f1dd" stroke="#c1b084" />
      <circle cx="7" cy="7.500" r="3.500" fill="#e1ecf8" stroke="#8fa9cc" />
      <path d="M8 10.500h4V8.500l4 3.500-4 3.500v-2H8z" fill="#fbe4a0" stroke="#d2a958" />
    </>
  ),
  console: (
    <>
      <path d="M2 2h12v9H2z" fill="#f3f7fd" stroke="#2a5ba8" strokeWidth="2" />
      <path d="M4 5.500h6M4 8h8" stroke="#5d7fb8" />
      <path d="M4 14h8" stroke="#2a5ba8" strokeWidth="2" />
    </>
  ),
  progress: (
    <>
      <path d="M1 4h14v4H1zM1 10h7v3H1z" fill="#b4c0b6" />
      <path d="M2 5h6v2H2z" fill="#7fba8d" />
      <circle cx="11.500" cy="11.500" r="3.500" fill="#d7eedb" stroke="#88be94" />
      <path d="M10.500 9.500v4l3-2z" fill="#6db37c" />
    </>
  ),
  stop: <path d="M3 3h10v10H3z" fill="#ee3a3f" stroke="#b51e25" />,
  removeX: <path d="M2.500 4.500l2-2L8 6l3.500-3.500 2 2L10 8l3.500 3.500-2 2L8 10l-3.500 3.500-2-2L6 8z" fill="#909090" stroke="#858585" />,
  removeAll: (
    <>
      <path d="M1 2.500l1.500-1.500L6 4l3-3 1.500 1.500L7 6l-4 4-2-2 3-2.500z" fill="#ddd" stroke="#a0a0a0" />
      <path d="M5 7l2-2 3.500 3.500L14 5l1.500 2-3 3.500L15.500 14l-2 1.500-3-3-3 3-2-2L8.500 10z" fill="#909090" stroke="#858585" />
    </>
  ),
  clearDoc: (
    <>
      <path d="M2.500 1.500h6l3 3v9h-9z" fill="#fffbe8" stroke="#a08a50" />
      <path d="M4 5.500h4M4 7.500h5M4 9.500h5M4 11.500h4" stroke="#5b84bd" />
      <path d="M9 9l6 6M15 9l-6 6" stroke="#7a7a7a" strokeWidth="2.200" />
    </>
  ),
  scrollLock: (
    <>
      <path d="M2.500 1.500h13v13h-13zM11.500 2v12" fill="#fff" stroke="#6e89b0" />
      <path d="M12.500 4h2M12.500 8h2v4h-2z" stroke="#3d6499" />
      <path d="M3 9V7q0-2 2-2t2 2v2" stroke="#8c6414" fill="none" strokeWidth="1.400" />
      <path d="M.5 9.500h9v6h-9z" fill="#f0bc4c" stroke="#8c6414" />
    </>
  ),
  wrap: (
    <>
      <path d="M2.500 1.500h6l3 3v9h-9z" fill="#fffbe8" stroke="#b09d60" />
      <path d="M4 4.500h3M4 6.500h4M4 8.500h3M4 10.500h3" stroke="#8a9cc4" />
      <path d="M14.500 4v6H9M11 7l-3 3 3 3" stroke="#d29b3c" strokeWidth="1.600" fill="none" />
    </>
  ),
  showOut: (
    <>
      <path d="M1.500 8h4v4.500h5M3 14.500h6" fill="none" stroke="#2f62ad" strokeWidth="1.500" />
      <path d="M5 1.500h10.500v8.500H5z" fill="#fff" stroke="#2f62ad" strokeWidth="1.300" />
      <path d="M7 4.500h6M7 6.500h5" stroke="#8aa5d4" />
    </>
  ),
  showErr: (
    <>
      <path d="M1.500 8h4v4.500h5M3 14.500h6" fill="none" stroke="#2f62ad" strokeWidth="1.500" />
      <path d="M5 1.500h10.500v8.500H5z" fill="#fff" stroke="#2f62ad" strokeWidth="1.300" />
      <path d="M7 3.500l4 4M11 3.500l-4 4" stroke="#e0343a" strokeWidth="1.800" />
      <path d="M12.500 4.500h2M12.500 6.500h2" stroke="#8aa5d4" />
    </>
  ),
  pin: (
    <>
      <path d="M1.500 5.500h11v9h-11z" fill="#e4f1fb" stroke="#6d7f95" />
      <path d="M1 5h12v3H1z" fill="#3e83c4" />
      <path d="M6 11l3-3M8 5l4 4 1-3 2-1-3-3-1 2z" stroke="#1f7a33" fill="#36a04d" />
    </>
  ),
  monitor: (
    <>
      <path d="M2 2h12v9H2z" fill="#f3f3f3" stroke="#8d8d8d" strokeWidth="2" />
      <path d="M5 5.500h6M5 7.500h5" stroke="#999" />
      <path d="M5 14h6" stroke="#8d8d8d" strokeWidth="2" />
    </>
  ),
  newConsole: (
    <>
      <path d="M1.500 3.500h12v11h-12z" fill="#eef6fd" stroke="#a08a50" />
      <path d="M1 3h10v3H1z" fill="#3e83c4" />
      <path d="M12.500.5l1 2.500 2 1-2 1-1 2.500-1-2.500-2-1 2-1z" fill="#fff2a8" stroke="#b8923a" />
    </>
  ),
};

type IconProps = { name: string; w?: number; size?: number };
const Picture = styled.svg`
  display: block;
  flex: none;
`;
const Icon = ({ name, w = 16, size = 16 }: IconProps) => (
  <Picture width={(w * size) / 16} height={size} viewBox={`0 0 ${w} 16`} aria-hidden="true">
    {icons[name]}
  </Picture>
);

/* ------------------------------------------------------------ shared parts */

const ToolButton = styled.button<{ $w?: number; $on?: boolean; $h?: number }>`
  display: flex;
  flex: none;
  align-items: center;
  justify-content: center;
  width: ${(p) => p.$w ?? 23}px;
  height: ${(p) => p.$h ?? 22}px;
  ${(p) =>
    p.$on &&
    css`
      background: #cce4fb;
      border: 1px solid #99cdf8;
    `}
`;

const EdgeButton = styled.button`
  display: flex;
  flex: none;
  justify-content: flex-end;
  width: 8px;
  margin-right: 1px;
`;

const Divider = styled.span<{ $h?: number }>`
  flex: none;
  width: 1px;
  height: ${(p) => p.$h ?? 18}px;
  margin: 0 5px 0 2px;
  background: #7f868f;
`;

type ToolItem = { icon: string; w?: number; on?: boolean } | "|";
const Tools = ({ items, h, dh }: { items: ToolItem[]; h?: number; dh?: number }) => (
  <>
    {items.map((it, i) =>
      it === "|" ? (
        <Divider key={i} $h={dh} />
      ) : (
        <ToolButton key={i} aria-label={it.icon} $w={it.w} $on={it.on} $h={h}>
          <Icon name={it.icon} />
        </ToolButton>
      )
    )}
  </>
);
const t = (...names: string[]): ToolItem[] =>
  names.map((n) => (n === "|" ? "|" : { icon: n, w: n.startsWith("caret") ? 19 : 23 }));

const Spacer = styled.span`
  flex: 1;
`;

/* -------------------------------------------------------------- page frame */

const Shell = styled.div`
  position: relative;
  display: flex;
  flex-direction: column;
  height: 100vh;
  overflow: hidden;
  background: ${c.frame};
`;
const TitleBar = styled.header`
  display: flex;
  flex: none;
  justify-content: flex-end;
  gap: 44px;
  height: 30px;
  padding: 7px 25px 0 0;
  background: #fff;
`;
const MenuBar = styled.nav`
  display: flex;
  flex: none;
  height: 23px;
  padding: 1px 0 0 8px;
  gap: 14px;
  background: #fff;
  border-bottom: 1px solid #f0f0f0;
`;
const MenuItem = styled.button`
  color: #6b6b6b;
  height: 20px;
`;
const CaptionButton = styled.button`
  width: 14px;
  height: 14px;
  display: flex;
`;
const MainToolbar = styled.div`
  display: flex;
  flex: none;
  align-items: center;
  height: 38px;
  padding-right: 8px;
  background: linear-gradient(#f6f8fe, #e1e6f6);
`;
const Dots = styled.span<{ $tall?: boolean }>`
  flex: none;
  width: 2px;
  height: ${(p) => (p.$tall ? 22 : 16)}px;
  margin: 0 2px;
  background: repeating-linear-gradient(#9b988c 0 2px, transparent 2px ${(p) => (p.$tall ? 6 : 4)}px);
`;
const CurveLine = styled.span`
  width: 6px;
  height: 32px;
  margin: 0 5px 0 -4px;
  border-right: 1px solid #9ea4b5;
  border-bottom-right-radius: 6px;
`;
const QuickAccess = styled.input`
  width: 102px;
  height: 26px;
  margin-right: 4px;
  padding: 0 2px;
  background: #fff;
  border: 1px solid #6b6b6b;
  &::placeholder {
    color: #6b6b6b;
    opacity: 1;
  }
`;
const Workbench = styled.main`
  display: flex;
  flex: 1;
  min-height: 0;
  gap: 5px;
`;
const Sliver = styled.div`
  flex: none;
  width: 8px;
  background: linear-gradient(${c.pale} 29px, #fff 29px);
  border-radius: 0 8px 0 0;
`;
const Stack = styled.div`
  display: flex;
  flex: 1;
  flex-direction: column;
  gap: 4px;
  min-width: 0;
`;
const Upper = styled.div`
  display: flex;
  flex: 1;
  gap: 4px;
  min-height: 0;
`;
const RightColumn = styled.div`
  display: flex;
  flex: none;
  flex-direction: column;
  gap: 4px;
  width: 358px;
`;
const Pane = styled.section<{ $grow: number }>`
  flex: ${(p) => p.$grow} 1 0;
  min-height: 0;
  background: #fff;
  border-radius: 8px;
  overflow: hidden;
`;
const PaneHeader = styled.div<{ $h?: number }>`
  display: flex;
  height: ${(p) => p.$h ?? 29}px;
  padding-right: 8px;
  background: ${c.pale};
`;
const PaneTab = styled.button<{ $on?: boolean }>`
  display: flex;
  flex: none;
  align-items: center;
  gap: 4px;
  height: 100%;
  padding: 1px 5px 0 4px;
  color: ${(p) => (p.$on ? "#000" : "#8e9099")};
  ${(p) =>
    p.$on &&
    css`
      padding-right: 4px;
      background: linear-gradient(#d5e1ee, #fff);
      border-radius: 8px 8px 0 0;
    `}
`;

/* ------------------------------------------------------------------ editor */

const Editor = styled.section`
  display: flex;
  flex: 1;
  flex-direction: column;
  min-width: 0;
  background: #fff;
  border: 1px solid ${c.edge};
  border-radius: 8px;
  overflow: hidden;
`;
const EditorTabs = styled.div`
  display: flex;
  flex: none;
  height: 28px;
  padding-right: 8px;
  background: linear-gradient(#d2e1ef, ${c.blue});
  box-shadow: inset 0 -1px ${c.edge};
`;
const EditorTab = styled.button<{ $on?: boolean }>`
  display: flex;
  flex: none;
  align-items: center;
  gap: 3px;
  height: 28px;
  padding: 0 24px 0 4px;
  ${(p) =>
    p.$on &&
    css`
      gap: 4px;
      padding: 0 4px 0 3px;
      background: #fff;
      border: 1px solid ${c.edge};
      border-width: 0 1px;
      border-radius: 8px 8px 0 0;
    `}
`;
const EditorBody = styled.div`
  display: flex;
  flex: 1;
  min-height: 0;
  margin: 4px 4px 0;
`;
const BottomTabs = styled.div`
  display: flex;
  flex: none;
  height: 28px;
  margin: 0 4px 1px 2px;
  background: ${c.blue};
  border-top: 2px solid ${c.blue};
  box-shadow: inset 0 1px ${c.line};
`;
const BottomTab = styled.button<{ $on?: boolean }>`
  display: flex;
  align-items: center;
  gap: 3px;
  height: 25px;
  padding: 0 4px;
  ${(p) =>
    p.$on &&
    css`
      background: #fff;
      border: 1px solid ${c.line};
      border-top: 0;
      border-radius: 0 0 4px 4px;
      padding: 0 3px;
    `}
`;
const LeftColumn = styled.div`
  display: flex;
  flex: none;
  flex-direction: column;
  width: 295px;
  background: #fff;
`;
const SashHeader = styled.div`
  display: flex;
  flex: none;
  height: 19px;
  background: ${c.blue};
`;
const SashTitle = styled.div<{ $w: number }>`
  ${boldFace}
  display: flex;
  align-items: center;
  justify-content: center;
  gap: 6px;
  width: ${(p) => p.$w}px;
  height: 18px;
  background: ${c.pale};
  &::before,
  &::after {
    content: "";
    width: 28px;
    height: 8px;
    border: 1px solid #a7a9ae;
    border-width: 1px 0;
  }
`;
const Group = styled.section<{ $grow: number }>`
  display: flex;
  flex: ${(p) => p.$grow} 1 0;
  flex-direction: column;
  min-height: 0;
  padding: 1px;
  border: 1px solid ${c.line};
  overflow: hidden;
`;
const GroupHeader = styled.div`
  display: flex;
  flex: none;
  align-items: center;
  height: 23px;
  padding-left: 1px;
  background: ${c.blue};
  border-bottom: 1px solid ${c.line};
`;
const GroupTitle = styled.span`
  flex: 1;
  margin-left: 4px;
`;
const Sash = styled.div<{ $w?: number; $h?: number }>`
  flex: none;
  width: ${(p) => (p.$w ? p.$w + "px" : "auto")};
  height: ${(p) => (p.$h ? p.$h + "px" : "auto")};
  background: ${c.blue};
`;
const Tree = styled.ul`
  flex: 1;
  padding-left: 1px;
  overflow: hidden;
`;
const TreeRow = styled.li<{ $depth: number }>`
  display: flex;
  align-items: center;
  height: 23px;
  padding-left: ${(p) => p.$depth * 20}px;
  white-space: nowrap;
`;
const Twisty = styled.button`
  display: flex;
  flex: none;
  justify-content: center;
  width: 20px;
`;
const TreeLabel = styled.span<{ $on?: boolean; $icon: number }>`
  display: flex;
  align-items: center;
  height: 23px;
  padding-right: 2px;
  background: ${(p) => (p.$on ? "#d9d9d9" : "none")};
  svg {
    margin: 0 ${(p) => p.$icon}px 0 2px;
  }
`;
const Hint = styled.span`
  color: #957d47;
  white-space: pre;
`;
const ScrollBar = styled.div<{ $row?: boolean }>`
  display: flex;
  flex: none;
  flex-direction: ${(p) => (p.$row ? "row" : "column")};
  align-items: center;
  ${(p) => (p.$row ? "height: 20px;" : "width: 20px;")}
  background: ${c.grey};
`;
const Thumb = styled.div<{ $pct: number; $row?: boolean }>`
  flex: 0 0 ${(p) => p.$pct}%;
  ${(p) => (p.$row ? "height: 100%;" : "width: 100%;")}
  background: #cdcdcd;
`;
const Props = styled.div`
  display: flex;
  flex: 1;
  min-height: 0;
  overflow: hidden;
`;
const PropTable = styled.table`
  flex: 1;
  width: 268px;
  align-self: flex-start;
  margin: 1px 1px 0 0;
  border-collapse: collapse;
  table-layout: fixed;
  th,
  td {
    height: 22px;
    padding: 0;
    border: 1px solid #c0c0c0;
    white-space: nowrap;
    overflow: hidden;
  }
  th {
    width: 108px;
    text-align: left;
  }
`;
const PropRow = styled.tr<{ $bold?: boolean; $tone: "white" | "grey" | "selected" }>`
  background: ${(p) => ({ white: "#fff", grey: "#f2f2f2", selected: "#0078d7" })[p.$tone]};
  color: ${(p) => (p.$tone === "selected" ? "#fff" : "#000")};
  th {
    font-weight: 400;
    ${(p) => p.$bold && boldFace}
  }
  td {
    color: ${(p) => (p.$tone === "selected" ? "#fff" : "#000080")};
  }
`;
const NameCell = styled.div`
  display: flex;
  align-items: center;
  height: 21px;
  padding-bottom: 2px;
`;
const ExpandBox = styled.button`
  width: 9px;
  height: 9px;
  border: 1px solid #848484;
  background: linear-gradient(#333, #333) center / 5px 1px no-repeat, linear-gradient(#333, #333) center / 1px 5px no-repeat, #fff;
`;
const ExpandSlot = styled.span`
  display: flex;
  flex: none;
  width: 14px;
  padding-left: 1px;
`;
const ValueCell = styled.div`
  display: flex;
  align-items: center;
  height: 21px;
  padding-left: 3px;
`;
const ValueText = styled.span`
  flex: 1;
  overflow: hidden;
  padding-bottom: 2px;
`;
const Swatch = styled.span<{ $color: string }>`
  width: 11px;
  height: 11px;
  margin-right: 2px;
  background: ${(p) => p.$color};
  border: 1px solid #6a6a6a;
`;
const TrueBox = styled.input`
  appearance: none;
  width: 13px;
  height: 13px;
  margin-right: 2px;
  background: #fff;
  border: 1px solid #1c5180;
  position: relative;
  &:checked::after {
    content: "";
    position: absolute;
    left: 3px;
    top: 0;
    width: 4px;
    height: 8px;
    border: solid #21a121;
    border-width: 0 2px 2px 0;
    transform: rotate(40deg);
  }
`;
const More = styled.button`
  display: flex;
  flex: none;
  align-items: center;
  justify-content: center;
  width: 20px;
  height: 19px;
  background: #e1e1e1;
  border: 1px solid #adadad;
`;

/* ----------------------------------------------------------------- palette */

const DesignArea = styled.div`
  display: flex;
  flex: 1;
  flex-direction: column;
  min-width: 0;
`;
const DesignToolbar = styled.div`
  display: flex;
  flex: none;
  align-items: center;
  height: 35px;
  background: ${c.blue};
  border-bottom: 1px solid ${c.line};
`;
const LafSelect = styled.select`
  appearance: none;
  flex: 1;
  min-width: 0;
  height: 24px;
  padding: 0;
  border: 0;
  font: inherit;
  background: transparent;
`;
const LafBox = styled.span`
  display: flex;
  flex: none;
  align-items: center;
  width: 129px;
  & > svg {
    margin-left: -17px;
    pointer-events: none;
  }
`;
const DesignMain = styled.div`
  display: flex;
  flex: 1;
  min-height: 0;
`;
const Palette = styled.div`
  display: flex;
  flex: none;
  flex-direction: column;
  width: 166px;
  background: ${c.grey};
`;
const PaletteBody = styled.div`
  display: flex;
  flex: 1;
  min-height: 0;
`;
const Drawers = styled.div`
  flex: 1;
  min-width: 0;
  overflow: hidden;
`;
const Drawer = styled.button`
  ${boldFace}
  display: flex;
  align-items: center;
  gap: 4px;
  width: 145px;
  height: 24px;
  padding: 0 0 2px 4px;
  background: linear-gradient(90deg, #e8e8e8, #fff);
  border: 1px solid ${c.line};
  border-width: 0 1px 1px 0;
  white-space: nowrap;
`;
const DrawerItems = styled.div`
  display: grid;
  grid-template-columns: 72px 74px;
`;
const Entry = styled.button<{ $on?: boolean }>`
  display: flex;
  align-items: center;
  gap: 2px;
  height: 26px;
  padding-left: 4px;
  text-align: left;
  white-space: nowrap;
  ${(p) =>
    p.$on &&
    css`
      margin: 1px 1px 1px 2px;
      height: 24px;
      padding-left: 2px;
      background: #fff;
      border: 1px solid #fff;
      border-color: ${c.line} #fff #fff ${c.line};
    `}
`;
const CanvasGrid = styled.div`
  display: grid;
  flex: 1;
  grid-template: 16px 1fr / 16px 1fr;
  min-width: 0;
  margin-left: 1px;
  border-left: 1px solid ${c.line};
`;
const Corner = styled.div`
  background: ${c.blue};
`;
const RulerTop = styled.div`
  background: ${c.pale};
  border-bottom: 1px solid ${c.line};
`;
const RulerLeft = styled.div`
  background: ${c.pale};
  border-right: 1px solid ${c.line};
`;
const Canvas = styled.div`
  position: relative;
  background: #fff;
  overflow: hidden;
`;
const Version = styled.span`
  position: absolute;
  right: 3px;
  bottom: -12px;
  color: #b5b5b5;
`;
const SwingFrame = styled.div`
  position: absolute;
  left: 20px;
  top: 20px;
  width: 450px;
  height: 300px;
  padding: 0 3px;
  background: #eee;
  border: 1px solid #45484d;
`;
const SwingTitle = styled.div`
  display: flex;
  align-items: center;
  gap: 4px;
  height: 31px;
  margin: 0 -3px;
  padding: 0 4px;
  color: #8e9297;
  font-size: 15px;
  background: linear-gradient(#bccbda, #d6e3f2);
`;
const SwingButton = styled.button`
  display: flex;
  align-items: center;
  justify-content: center;
  width: 42px;
  height: 24px;
  margin-left: -2px;
  border: 1px solid #8397b0;
  border-radius: 2px;
  background: linear-gradient(#c3d0df, #cddaea);
  box-shadow: inset 0 0 0 1px #d5e0ec;
`;
const CupBox = styled.span`
  display: flex;
  align-items: center;
  justify-content: center;
  width: 20px;
  height: 20px;
  border: 1px solid #6d8399;
  border-radius: 2px;
  background: linear-gradient(#fff, #dbe6f1);
`;
const GrabLine = styled.span`
  position: absolute;
  left: 217px;
  top: 37px;
  width: 1px;
  height: 24px;
  background: #9a9af5;
  &::before {
    content: "";
    position: absolute;
    left: -3px;
    width: 7px;
    height: 4px;
    background: #7f7ffb;
    border-radius: 0 0 4px 4px;
  }
`;

/* ---------------------------------------------------------- running window */

const Dialog = styled.div`
  position: absolute;
  left: 477px;
  top: 250px;
  width: 446px;
  height: 298px;
  background: #eee;
  border: 1px solid #666;
  box-shadow: 0 4px 20px rgba(0, 0, 0, 0.4);
`;
const DialogTitle = styled.div`
  display: flex;
  align-items: center;
  gap: 4px;
  height: 31px;
  padding: 0 23px 1px 3px;
  font-size: 15px;
  background: #fff;
`;
const DialogButtons = styled.div`
  display: flex;
  gap: 45px;
`;
const DialogHeading = styled.p`
  margin: 27px 0 0 132px;
  font: 700 21px/28px "Noto Serif CJK SC", "Liberation Serif", "Noto Sans CJK SC", serif;
  color: #333;
`;
const Badge = styled.div`
  position: absolute;
  right: -34px;
  top: 73px;
  width: 58px;
  height: 58px;
  padding: 15px 0 0 4px;
  border: 3px solid #eee;
  border-radius: 50%;
  background: radial-gradient(circle at 40% 20%, #74e08a, #42c95e 50%, #35b850);
  box-shadow: 0 0 0 1px #999, 0 2px 10px rgba(0, 0, 0, 0.35);
  color: #fff;
  font-size: 13px;
  font-weight: 700;
`;

/* -------------------------------------------------------------- right side */

const TaskTools = styled.div`
  display: flex;
  align-items: center;
  justify-content: flex-end;
  height: 27px;
  padding-bottom: 1px;
`;
const FindRow = styled.div`
  display: flex;
  align-items: center;
  padding: 2px 4px 0 6px;
`;
const FindBox = styled.label`
  display: flex;
  flex: none;
  align-items: center;
  width: 126px;
  height: 24px;
  padding: 0 2px 0 8px;
  border: 1px solid #a5a5ad;
  input {
    flex: 1;
    min-width: 0;
    outline: 0;
  }
  input::placeholder {
    color: #555;
    opacity: 1;
  }
`;
const Link = styled.a`
  color: #0a4fb5;
  text-decoration: none;
  margin-left: 4px;
`;
const LinkGap = styled.span<{ $w: number }>`
  display: flex;
  flex: none;
  width: ${(p) => p.$w}px;
  justify-content: flex-end;
`;
const OutlineTree = styled(Tree)`
  padding: 2px 0 0 6px;
`;
const PaneTools = styled.div`
  display: flex;
  align-items: center;
  height: 26px;
`;

/* ----------------------------------------------------------------- console */

const Console = styled.section`
  flex: none;
  height: 65px;
  margin-right: 1px;
  background: #fff;
  border-radius: 8px 8px 0 0;
  overflow: hidden;
`;
const ConsoleLine = styled.p`
  margin: 0 2px 0 3px;
  padding-top: 2px;
  height: 23px;
  border-bottom: 1px solid #8f8f8f;
  white-space: nowrap;
`;
const ConsoleBody = styled.div`
  display: flex;
  justify-content: flex-end;
  padding: 1px 2px 0 0;
`;
const ConsoleScroll = styled.div`
  width: 20px;
  height: 20px;
  padding: 2px;
  background: ${c.grey};
`;

/* -------------------------------------------------------------------- data */

type Prop = {
  name: string;
  value?: string;
  bold?: boolean;
  tone?: "white" | "grey" | "selected";
  more?: boolean;
  swatch?: string;
  check?: boolean;
  expand?: boolean;
};
const properties: Prop[] = [
  { name: "Variable", value: "lblNewLabel_1", bold: true, tone: "white" },
  { name: "Constructor", value: "(Constructor prope...", bold: true, tone: "white", expand: true },
  { name: "Constraints", value: "(javax.swing.Gro...", bold: true, tone: "white", more: true },
  { name: "Class", value: "javax.swing.JLabel", bold: true },
  { name: "background", value: "240,240,240", swatch: "#f0f0f0", more: true },
  { name: "displayed...", bold: true },
  { name: "enabled", value: "true", check: true },
  { name: "font", value: "宋体 20 Bold", tone: "selected", more: true },
  { name: "foreground", value: "0,0,0", swatch: "#000", more: true },
  { name: "horizontal...", value: "LEADING" },
  { name: "icon", bold: true, more: true },
  { name: "labelFor", bold: true, more: true },
  { name: "text", value: "高速公路收费系统", bold: true, tone: "white", more: true },
];

type DrawerData = { title: string; closed?: boolean; items: [string, string][] };
const drawers: DrawerData[] = [
  { title: "System", items: [["cursor", "Sele..."], ["marquee", "Mar..."], ["beans", "Cho..."], ["tabOrder", "Tab ..."]] },
  {
    title: "Containers",
    items: [
      ["jpanel", "JPanel"], ["jscroll", "JScr..."], ["jsplit", "JSpli..."], ["jtab", "JTab..."],
      ["jtoolbar", "JToo..."], ["jlayered", "JLay..."], ["jdesktop", "JDes..."], ["jinternal", "JInte..."],
    ],
  },
  {
    title: "Layouts",
    items: [
      ["absolute", "Abs..."], ["flow", "Flow..."], ["border", "Bord..."], ["gridA", "Grid..."],
      ["gridB", "Grid..."], ["card", "Card..."], ["box", "BoxL..."], ["spring", "Spri..."],
      ["gridF", "For..."], ["gridM", "Mig..."], ["group", "Grou..."],
    ],
  },
  { title: "Struts & Sprin...", closed: true, items: [] },
  {
    title: "Components",
    items: [
      ["jlabel", "JLabel"], ["jtext", "JTex..."], ["jcombo", "JCo..."], ["jbutton", "JButt..."],
      ["jcheck", "JChe..."], ["jradio", "JRad..."], ["jtoggle", "JTog..."], ["jtextarea", "JTex..."],
      ["jformat", "JFor..."], ["jpass", "JPas..."],
    ],
  },
];

const Caption = ({ kind, color }: { kind: "min" | "max" | "restore" | "close"; color: string }) => (
  <CaptionButton aria-label={kind}>
    <svg width="14" height="14" viewBox="0 0 14 14" fill="none" stroke={color}>
      {kind === "min" && <path d="M1 6.500h12" />}
      {kind === "max" && <path d="M1.500 1.500h11v11h-11z" />}
      {kind === "restore" && <path d="M1.500 3.500h9v9h-9zM3.500 3V1.500h9v9H11" />}
      {kind === "close" && <path d="M1 1l12 12M13 1L1 13" strokeWidth="1.200" />}
    </svg>
  </CaptionButton>
);

const w24 = (...names: string[]): ToolItem[] => names.map((n) => (n === "|" ? "|" : { icon: n, w: 24 }));

const StructureView = () => (
  <LeftColumn>
    <SashHeader>
      <ToolButton aria-label="Collapse structure" $w={19} $h={19}><Icon name="leftTri" /></ToolButton>
      <SashTitle $w={150}>Structure</SashTitle>
    </SashHeader>
    <Group $grow={298}>
      <GroupHeader>
        <Icon name="components" />
        <GroupTitle>Components</GroupTitle>
        <Tools items={t("expandAll", "collapseAll")} />
      </GroupHeader>
      <Tree>
        <TreeRow $depth={0}>
          <Twisty aria-label="Toggle"><Icon name="chevDown" /></Twisty>
          <TreeLabel $icon={5}><Icon name="jframe" />(javax.swing.JFrame) - "管理员登录"</TreeLabel>
        </TreeRow>
        <TreeRow $depth={1}>
          <Twisty aria-label="Toggle"><Icon name="chevDown" /></Twisty>
          <TreeLabel $icon={5}><Icon name="jpanel" />contentPane</TreeLabel>
        </TreeRow>
        <TreeRow $depth={3}>
          <TreeLabel $icon={5} $on><Icon name="jlabel" />lblNewLabel_1 - "高速公路收费系统"</TreeLabel>
        </TreeRow>
      </Tree>
      <ScrollBar $row>
        <Twisty aria-label="Scroll left"><Icon name="scrollLeft" /></Twisty>
        <Thumb $row $pct={73} />
        <Spacer />
        <Twisty aria-label="Scroll right"><Icon name="scrollRight" /></Twisty>
      </ScrollBar>
    </Group>
    <Sash $h={3} />
    <Group $grow={299}>
      <GroupHeader>
        <Icon name="propsTable" />
        <GroupTitle>Properties</GroupTitle>
        <Tools items={t("gotoClass", "|", "nArrow", "convert", "|", "filterAdv", "tableBack")} />
      </GroupHeader>
      <Props>
        <PropTable>
          <tbody>
            {properties.map((p) => (
              <PropRow key={p.name} $bold={p.bold} $tone={p.tone ?? "grey"}>
                <th scope="row">
                  <NameCell>
                    <ExpandSlot>{p.expand && <ExpandBox aria-label="Expand" />}</ExpandSlot>
                    {p.name}
                  </NameCell>
                </th>
                <td>
                  <ValueCell>
                    {p.swatch && <Swatch $color={p.swatch} />}
                    {p.check && <TrueBox type="checkbox" defaultChecked aria-label={p.name} />}
                    <ValueText>{p.value}</ValueText>
                    {p.more && (
                      <More aria-label={`Edit ${p.name}`}>
                        <svg width="8" height="2"><path d="M0 0h2v2H0zM3 0h2v2H3zM6 0h2v2H6z" /></svg>
                      </More>
                    )}
                  </ValueCell>
                </td>
              </PropRow>
            ))}
          </tbody>
        </PropTable>
        <ScrollBar>
          <ToolButton aria-label="Scroll up" $w={20} $h={20}><Icon name="chevUp" /></ToolButton>
          <Thumb $pct={69} />
          <Spacer />
          <ToolButton aria-label="Scroll down" $w={20} $h={20}><Icon name="scrollDown" /></ToolButton>
        </ScrollBar>
      </Props>
    </Group>
  </LeftColumn>
);

const PaletteView = () => (
  <Palette>
    <SashHeader>
      <ToolButton aria-label="Collapse palette" $w={19} $h={19}><Icon name="leftTri" /></ToolButton>
      <SashTitle $w={133}>Palette</SashTitle>
    </SashHeader>
    <PaletteBody>
      <Drawers>
        {drawers.map((d) => (
          <React.Fragment key={d.title}>
            <Drawer><Icon name={d.closed ? "folderClosed" : "folderOpen"} />{d.title}</Drawer>
            <DrawerItems>
              {d.items.map(([icon, label]) => (
                <Entry key={icon} $on={icon === "cursor"}><Icon name={icon} />{label}</Entry>
              ))}
            </DrawerItems>
          </React.Fragment>
        ))}
      </Drawers>
      <ScrollBar>
        <ToolButton aria-label="Scroll up" $w={20} $h={21}><Icon name="chevUp" /></ToolButton>
        <Thumb $pct={67} />
      </ScrollBar>
    </PaletteBody>
  </Palette>
);

const CanvasView = () => (
  <CanvasGrid>
    <Corner />
    <RulerTop />
    <RulerLeft />
    <Canvas>
      <SwingFrame>
        <SwingTitle>
          <CupBox><Icon name="javaCup" /></CupBox>
          管理员登录
          <Spacer />
          <SwingButton aria-label="Minimize">
            <svg width="18" height="8"><rect x="1" y="1" width="16" height="5" rx="1" fill="#f2f2f2" stroke="#4d5466" /></svg>
          </SwingButton>
          <SwingButton aria-label="Maximize">
            <svg width="18" height="16"><path d="M1 1h16v14H1zM5 5h8v6H5z" fill="#dcdcdc" fillRule="evenodd" stroke="#4d5466" /></svg>
          </SwingButton>
          <SwingButton aria-label="Close">
            <svg width="20" height="16"><path d="M2 1h5l3 4 3-4h5v3l-4 4 4 4v3h-5l-3-4-3 4H2v-3l4-4-4-4z" fill="#f4f4f4" stroke="#4d5466" /></svg>
          </SwingButton>
        </SwingTitle>
        <GrabLine />
      </SwingFrame>
      <Version>1.10.0.201809061025</Version>
    </Canvas>
  </CanvasGrid>
);

export default function App() {
  return (
    <>
      <Global />
      <Shell>
        <TitleBar>
          <Caption kind="min" color="#8a8a8a" />
          <Caption kind="restore" color="#8a8a8a" />
          <Caption kind="close" color="#8a8a8a" />
        </TitleBar>
        <MenuBar>
          <MenuItem>Window</MenuItem>
          <MenuItem>Help</MenuItem>
        </MenuBar>
        <MainToolbar>
          <EdgeButton aria-label="More"><Icon name="caret" /></EdgeButton>
          <Dots />
          <Tools items={t("folderBalls", "folderDoc", "rocket", "caret")} />
          <Dots />
          <Tools items={t("stepDown", "caretGrey", "stepUp", "caretGrey", "backStar", "back", "caret", "forward", "caretGrey")} />
          <Spacer />
          <QuickAccess placeholder="Quick Access" aria-label="Quick Access" />
          <Dots $tall />
          <CurveLine />
          <Tools items={t("openPersp", "|")} dh={18} />
          <Tools items={[{ icon: "perspJava", on: true }, { icon: "perspEE" }]} />
        </MainToolbar>
        <Workbench>
          <Sliver />
          <Stack>
            <Upper>
              <Editor>
                <EditorTabs>
                  <EditorTab><Icon name="java" />DbUtil.java</EditorTab>
                  <EditorTab><Icon name="java" />User.java</EditorTab>
                  <EditorTab><Icon name="java" />UserDao.java</EditorTab>
                  <EditorTab $on><Icon name="javaForm" />LogOnFrm.java<Icon name="close" /></EditorTab>
                  <Spacer />
                  <PaneTools>
                    <Tools items={t("minPane", "maxPane")} />
                  </PaneTools>
                </EditorTabs>
                <EditorBody>
                  <StructureView />
                  <Sash $w={5} />
                  <DesignArea>
                    <DesignToolbar>
                      <Tools dh={30} items={w24("inspector", "|", "preview", "refresh", "|", "undo", "redo", "|", "cut", "copy", "paste", "del", "|", "testWin", "|")} />
                      <Tools dh={30} items={[{ icon: "globe", w: 32 }, { icon: "caret", w: 16 }, "|"]} />
                      <LafBox>
                        <ToolButton as="span" $w={30}><Icon name="gears" /></ToolButton>
                        <LafSelect aria-label="Look and feel"><option>&lt;system&gt;</option></LafSelect>
                        <Icon name="caret" />
                      </LafBox>
                      <Tools dh={30} items={w24("|", "alignL", "alignH", "alignR", "|", "alignT", "alignM", "alignB", "|", "sameW", "sameH", "|", "centerH", "centerV")} />
                    </DesignToolbar>
                    <DesignMain>
                      <PaletteView />
                      <Sash $w={3} />
                      <CanvasView />
                    </DesignMain>
                  </DesignArea>
                </EditorBody>
                <BottomTabs>
                  <BottomTab><Icon name="source" />Source</BottomTab>
                  <BottomTab $on><Icon name="design" />Design</BottomTab>
                </BottomTabs>
              </Editor>
              <RightColumn>
                <Pane $grow={340}>
                  <PaneHeader>
                    <PaneTab $on><Icon name="taskList" />Task List<Icon name="close" /></PaneTab>
                    <Spacer />
                    <PaneTools><Tools items={t("minPane", "maxPane")} /></PaneTools>
                  </PaneHeader>
                  <TaskTools>
                    <Tools items={[...t("newTask", "caret", "|"), { icon: "categorized", on: true }, ...t("scheduled", "|", "workweek", "|", "focus", "mine", "collapse", "|", "sync"), { icon: "viewMenu", w: 34 }]} />
                  </TaskTools>
                  <FindRow>
                    <FindBox>
                      <input placeholder="Find" aria-label="Find" />
                      <Icon name="search" />
                    </FindBox>
                    <LinkGap $w={24}><Icon name="rightTri" /></LinkGap>
                    <Link href="#all">All</Link>
                    <LinkGap $w={22}><Icon name="rightTri" /></LinkGap>
                    <Link href="#activate">Activate...</Link>
                    <Spacer />
                    <Icon name="help" />
                  </FindRow>
                </Pane>
                <Pane $grow={339}>
                  <PaneHeader>
                    <PaneTab $on><Icon name="outline" />Outline<Icon name="close" /></PaneTab>
                    <Spacer />
                    <PaneTools>
                      <Tools items={[...t("greyBalls", "collapse", "sortAz", "hideFields", "hideStatic", "greenDot", "hideLocal"), { icon: "viewMenu", w: 32 }, { icon: "minPane", w: 16 }, { icon: "maxPane", w: 24 }]} />
                    </PaneTools>
                  </PaneHeader>
                  <OutlineTree>
                    <TreeRow $depth={1}>
                      <TreeLabel $icon={3}><Icon name="pkg" w={24} />view</TreeLabel>
                    </TreeRow>
                    <TreeRow $depth={0}>
                      <Twisty aria-label="Toggle"><Icon name="chevDown" size={20} /></Twisty>
                      <TreeLabel $icon={3}><Icon name="classRun" w={24} />LogOnFrm</TreeLabel>
                    </TreeRow>
                    <TreeRow $depth={2}>
                      <TreeLabel $icon={3}><Icon name="fieldRed" w={24} />contentPane<Hint> : JPanel</Hint></TreeLabel>
                    </TreeRow>
                    <TreeRow $depth={1}>
                      <Twisty aria-label="Toggle"><Icon name="chevDown" size={20} /></Twisty>
                      <TreeLabel $icon={3}><Icon name="methodS" w={24} />main(String[])<Hint> : void</Hint></TreeLabel>
                    </TreeRow>
                    <TreeRow $depth={2}>
                      <Twisty aria-label="Toggle"><Icon name="chevRight" /></Twisty>
                      <TreeLabel $icon={3}><Icon name="classAnon" w={24} />new Runnable() {"{...}"}</TreeLabel>
                    </TreeRow>
                    <TreeRow $depth={2}>
                      <TreeLabel $icon={3} $on><Icon name="methodC" w={24} />LogOnFrm()</TreeLabel>
                    </TreeRow>
                  </OutlineTree>
                </Pane>
              </RightColumn>
            </Upper>
            <Console>
              <PaneHeader $h={30}>
                <PaneTab><Icon name="problems" />Problems</PaneTab>
                <PaneTab><Icon name="at" />Javadoc</PaneTab>
                <PaneTab><Icon name="declaration" />Declaration</PaneTab>
                <PaneTab $on><Icon name="console" />Console<Icon name="close" /></PaneTab>
                <PaneTab><Icon name="progress" />Progress</PaneTab>
                <Spacer />
                <PaneTools>
                  <Tools
                    items={[
                      ...t("stop", "removeX", "removeAll", "|", "clearDoc", "scrollLock", "wrap"),
                      { icon: "showOut", on: true },
                      { icon: "showErr", on: true },
                      ...t("|", "pin", "monitor", "caretGrey", "newConsole", "caret"),
                      { icon: "minPane", w: 22 },
                      { icon: "maxPane", w: 24 },
                    ]}
                  />
                </PaneTools>
              </PaneHeader>
              <ConsoleLine>
                LogOnFrm [Java Application] C:\Program Files\Java\jre1.8.0_181\bin\javaw.exe (2019年8月23日 下午8:42:13)
              </ConsoleLine>
              <ConsoleBody>
                <ConsoleScroll><Icon name="chevUpPale" /></ConsoleScroll>
              </ConsoleBody>
            </Console>
          </Stack>
        </Workbench>
        <Dialog role="dialog" aria-label="管理员登录">
          <DialogTitle>
            <CupBox><Icon name="javaCup" /></CupBox>
            管理员登录
            <Spacer />
            <DialogButtons>
              <Caption kind="min" color="#000" />
              <Caption kind="max" color="#c4c4c4" />
              <Caption kind="close" color="#000" />
            </DialogButtons>
          </DialogTitle>
          <DialogHeading>高速公路收费系统</DialogHeading>
        </Dialog>
        <Badge>74</Badge>
      </Shell>
    </>
  );
}
